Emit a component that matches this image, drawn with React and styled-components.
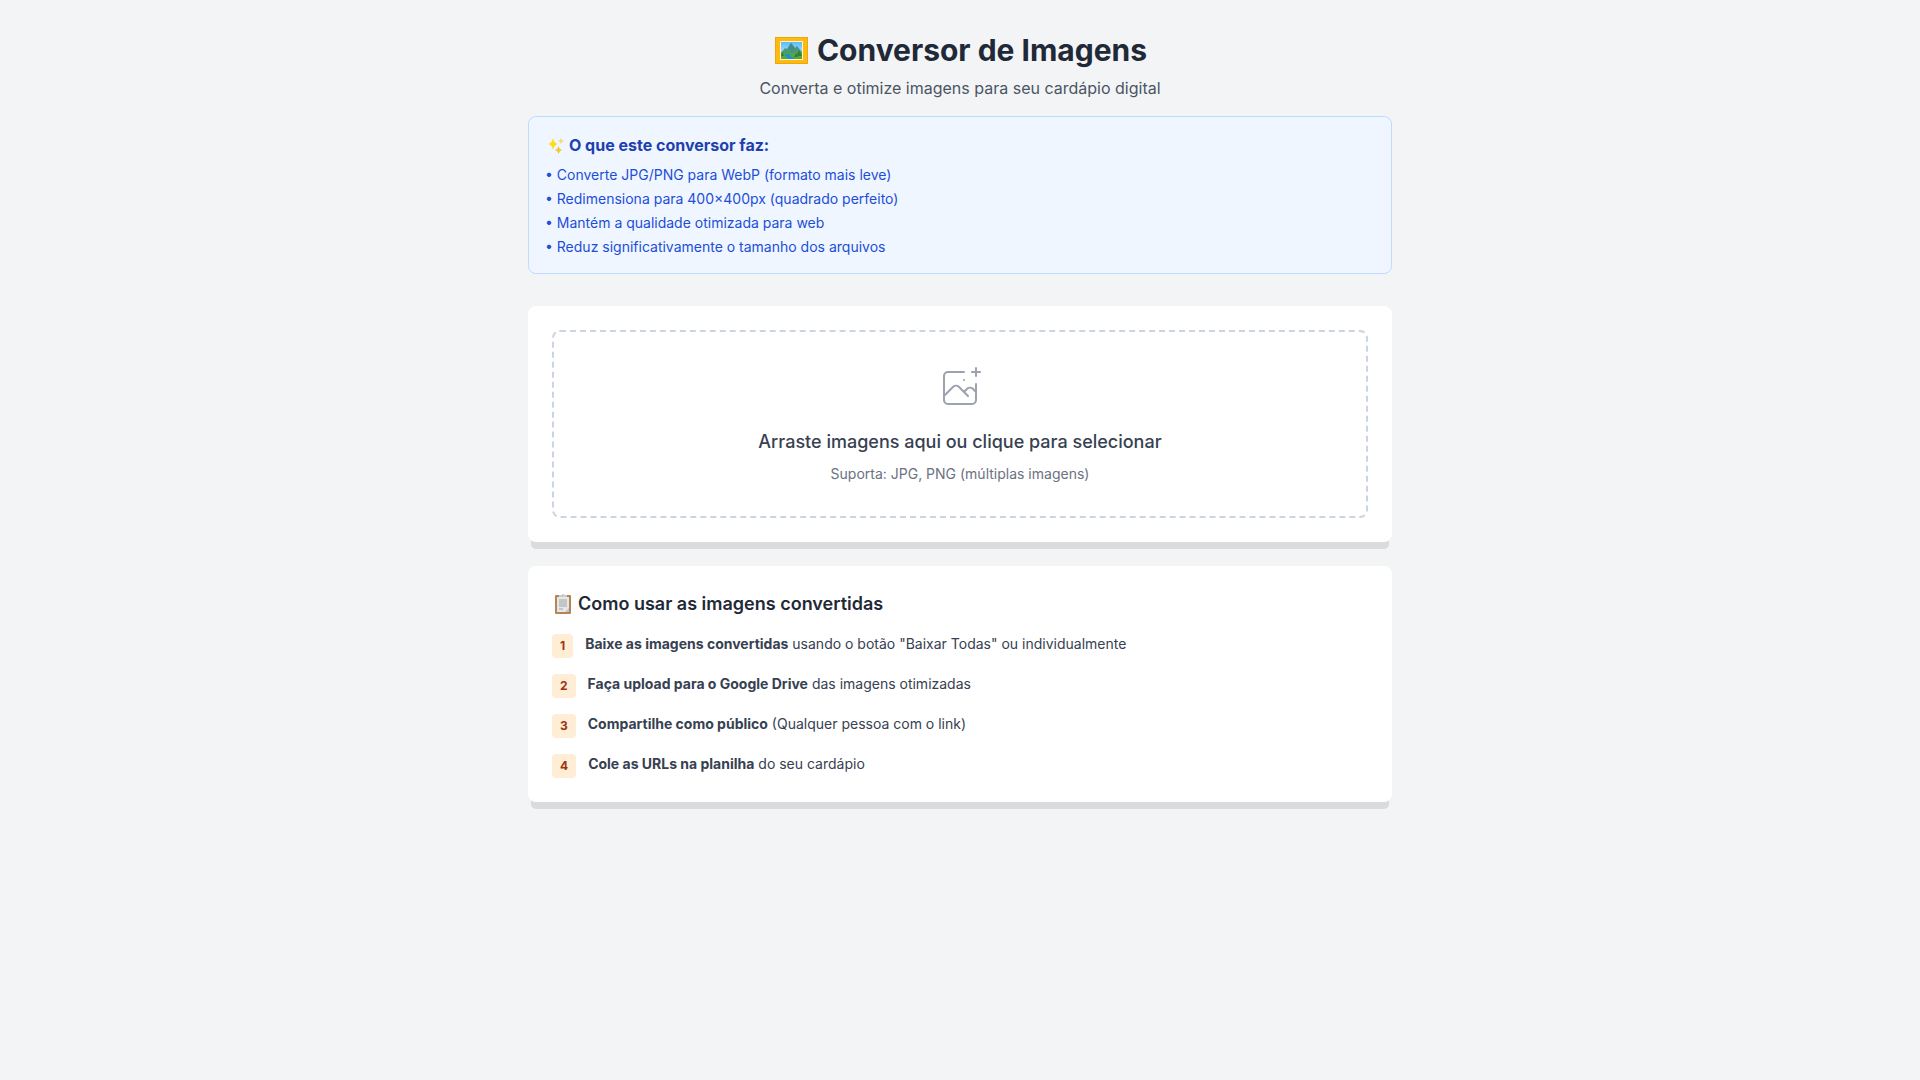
import { useState } from "react"
import styled, { createGlobalStyle } from "styled-components"

const GlobalStyle = createGlobalStyle`
  *, *::before, *::after {
    box-sizing: border-box;
  }
  body {
    margin: 0;
    background-color: #f3f4f6;
    color: #1f2937;
    font-family: Inter, "Noto Sans", sans-serif;
    font-size: 16px;
    line-height: 24px;
  }
`

const Page = styled.main`
  max-width: 896px;
  margin: 0 auto;
  padding: 32px 16px;
`

const Header = styled.header`
  display: flex;
  flex-direction: column;
  gap: 8px;
  margin-bottom: 16px;
  text-align: center;
`

const Title = styled.h1`
  display: flex;
  align-items: center;
  justify-content: center;
  gap: 8px;
  margin: 0;
  font-size: 30px;
  line-height: 36px;
  font-weight: 700;
`

const Subtitle = styled.p`
  margin: 0;
  color: #4b5563;
`

const InfoBox = styled.section`
  margin-bottom: 32px;
  padding: 16px;
  border: 1px solid #bfdbfe;
  border-radius: 8px;
  background-color: #eff6ff;
`

const InfoTitle = styled.h2`
  display: flex;
  align-items: center;
  gap: 4px;
  margin: 0 0 8px;
  color: #1e40af;
  font-size: 16px;
  line-height: 24px;
  font-weight: 700;
`

const InfoList = styled.ul`
  display: flex;
  flex-direction: column;
  gap: 4px;
  margin: 0;
  padding: 0;
  list-style: none;
  color: #1d4ed8;
  font-size: 14px;
  line-height: 20px;
`

const Card = styled.section`
  margin-bottom: 24px;
  padding: 24px;
  border-radius: 8px;
  background-color: #ffffff;
  box-shadow: 0 10px 0 -3px rgba(0, 0, 0, 0.1);
`

const DropZone = styled.label`
  display: flex;
  flex-direction: column;
  align-items: center;
  padding: 32px;
  border: 2px dashed ${({ $active }) => ($active ? "#f97316" : "#cbd5e1")};
  border-radius: 8px;
  text-align: center;
  cursor: pointer;
  &:hover,
  &:focus-within {
    border-color: #f97316;
  }
`

const FileInput = styled.input`
  position: absolute;
  width: 1px;
  height: 1px;
  overflow: hidden;
  opacity: 0;
`

const UploadIcon = styled.svg`
  width: 48px;
  height: 48px;
  margin-bottom: 16px;
  color: #9ca3af;
`

const DropText = styled.span`
  margin-bottom: 8px;
  color: #374151;
  font-size: 18px;
  line-height: 28px;
  font-weight: 500;
`

const DropHint = styled.span`
  color: #6b7280;
  font-size: 14px;
  line-height: 20px;
`

const CardTitle = styled.h2`
  display: flex;
  align-items: center;
  gap: 4px;
  margin: 0 0 16px;
  font-size: 18px;
  line-height: 28px;
  font-weight: 600;
`

const Steps = styled.ol`
  display: flex;
  flex-direction: column;
  gap: 16px;
  margin: 0;
  padding: 0;
  list-style: none;
`

const Step = styled.li`
  display: flex;
  align-items: flex-start;
  gap: 12px;
  color: #374151;
  font-size: 14px;
  line-height: 20px;
`

const StepNumber = styled.span`
  padding: 4px 8px;
  border-radius: 4px;
  background-color: #ffedd5;
  color: #9a3412;
  font-size: 12px;
  line-height: 16px;
  font-weight: 700;
`

const StepText = styled.p`
  margin: 0;
  strong {
    font-weight: 700;
  }
`

const features = [
  "Converte JPG/PNG para WebP (formato mais leve)",
  "Redimensiona para 400×400px (quadrado perfeito)",
  "Mantém a qualidade otimizada para web",
  "Reduz significativamente o tamanho dos arquivos",
]

const steps = [
  { action: "Baixe as imagens convertidas", detail: 'usando o botão "Baixar Todas" ou individualmente' },
  { action: "Faça upload para o Google Drive", detail: "das imagens otimizadas" },
  { action: "Compartilhe como público", detail: "(Qualquer pessoa com o link)" },
  { action: "Cole as URLs na planilha", detail: "do seu cardápio" },
]

const FrameIcon = () => (
  <svg width="36" height="36" viewBox="0 0 36 36" aria-hidden="true">
    <defs>
      <linearGradient id="sky" x1="0" y1="0" x2="0" y2="1">
        <stop offset="0" stopColor="#58bdf8" />
        <stop offset="1" stopColor="#d5f3fc" />
      </linearGradient>
      <linearGradient id="hill" x1="0" y1="0" x2="0" y2="1">
        <stop offset="0" stopColor="#4b9097" />
        <stop offset="1" stopColor="#43a45c" />
      </linearGradient>
    </defs>
    <rect x="2" y="5" width="33" height="27" fill="#eba70b" />
    <rect x="3" y="6" width="31" height="25" fill="#ffb90f" />
    <path d="M7 9h23v19H7z" fill="#fff3c9" />
    <path d="M8 10h21v17H8z" fill="url(#sky)" />
    <path d="M8 21l4-5 2 1 4-6 4 5 2-2 5 6v7H8z" fill="url(#hill)" />
    <path d="M18 11l4 5-3 4-4-4z" fill="#438590" opacity="0.6" />
    <path d="M8 21c5 0 9 1 21 0v6H8z" fill="#55a73e" />
    <path d="M12 22c4 0 6 1 5 2s5 1 4 3h-6c1-2-4-2-3-5z" fill="#168fdf" />
    <path d="M9 19l2 5H8zM26 18l3 6h-6zM23 21l2 4h-4z" fill="#34803b" />
  </svg>
)

const SparklesIcon = () => (
  <svg width="20" height="20" viewBox="0 0 20 20" aria-hidden="true">
    <path d="M8 3q.8 5.2 5 6-4.200.8-5 6-.8-5.200-5-6 4.200-.8 5-6z" fill="#fddb16" />
    <path d="M16 3q.5 2.500 3 3-2.500.5-3 3-.5-2.500-3-3 2.500-.5 3-3z" fill="#f5dc72" />
    <path d="M13.500 11q.6 3.200 3.500 4-2.900.8-3.500 4-.6-3.200-3.500-4 2.900-.8 3.500-4z" fill="#f3c638" />
  </svg>
)

const ClipboardIcon = () => (
  <svg width="22" height="28" viewBox="0 0 22 28" aria-hidden="true">
    <rect x="3" y="5" width="16" height="19" rx="1" fill="#b78452" />
    <path d="M5 7h12v15H5z" fill="#e5e7e8" />
    <path d="M13 22l4-4v4z" fill="#c1c4c7" />
    <path d="M7 7V5h3V4h2v1h3v2z" fill="#c8cccf" />
    <path d="M7 10h8M7 12h8M7 14h8M7 16h8M7 19h4" stroke="#a2a6aa" />
  </svg>
)

const ImageDrop = () => {
  const [dragging, setDragging] = useState(false)

  const handleDragOver = (e) => {
    e.preventDefault()
    setDragging(true)
  }
  const handleDrop = (e) => {
    e.preventDefault()
    setDragging(false)
  }

  return (
    <DropZone
      htmlFor="images"
      $active={dragging}
      onDragOver={handleDragOver}
      onDragLeave={() => setDragging(false)}
      onDrop={handleDrop}
    >
      <FileInput id="images" type="file" accept="image/jpeg,image/png" multiple />
      <UploadIcon viewBox="0 0 48 48" fill="none" stroke="currentColor" aria-hidden="true">
        <path
          d="M28 8H12a4 4 0 00-4 4v20m32-12v8m0 0v8a4 4 0 01-4 4H12a4 4 0 01-4-4v-4m32-4l-3.172-3.172a4 4 0 00-5.656 0L28 28M8 32l9.172-9.172a4 4 0 015.656 0L28 28m0 0l4 4m4-24h8m-4-4v8m-12 4h.02"
          strokeWidth="2"
          strokeLinecap="round"
          strokeLinejoin="round"
        />
      </UploadIcon>
      <DropText>Arraste imagens aqui ou clique para selecionar</DropText>
      <DropHint>Suporta: JPG, PNG (múltiplas imagens)</DropHint>
    </DropZone>
  )
}

export default function App() {
  return (
    <>
      <GlobalStyle />
      <Page>
        <Header>
          <Title>
            <FrameIcon />
            Conversor de Imagens
          </Title>
          <Subtitle>Converta e otimize imagens para seu cardápio digital</Subtitle>
        </Header>
        <InfoBox>
          <InfoTitle>
            <SparklesIcon />
            O que este conversor faz:
          </InfoTitle>
          <InfoList>
            {features.map((feature) => (
              <li key={feature}>• {feature}</li>
            ))}
          </InfoList>
        </InfoBox>
        <Card>
          <ImageDrop />
        </Card>
        <Card>
          <CardTitle>
            <ClipboardIcon />
            Como usar as imagens convertidas
          </CardTitle>
          <Steps>
            {steps.map(({ action, detail }, index) => (
              <Step key={action}>
                <StepNumber>{index + 1}</StepNumber>
                <StepText>
                  <strong>{action}</strong> {detail}
                </StepText>
              </Step>
            ))}
          </Steps>
        </Card>
      </Page>
    </>
  )
}
